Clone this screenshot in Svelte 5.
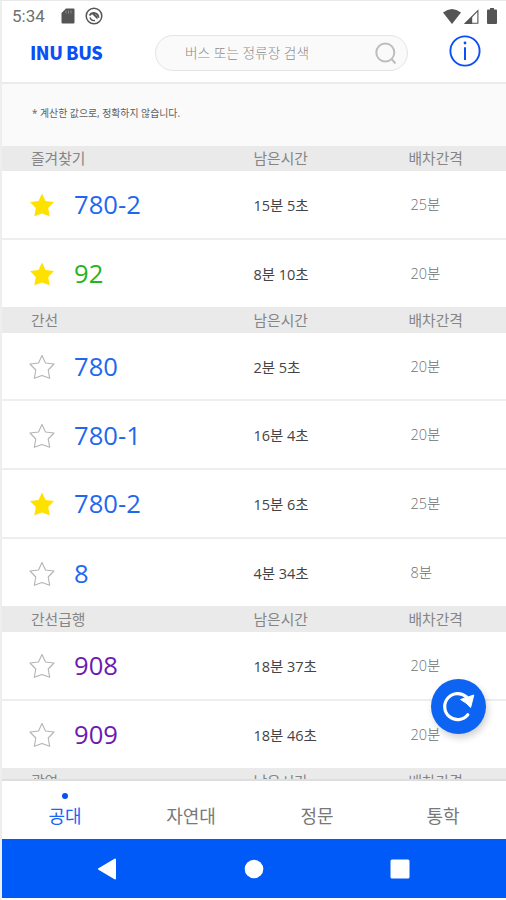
<script lang="ts">
	const groups = [
		{
			title: '즐겨찾기',
			routes: [
				{ no: '780-2', type: 'blue', left: '15분 5초', every: '25분', starred: true },
				{ no: '92', type: 'green', left: '8분 10초', every: '20분', starred: true }
			]
		},
		{
			title: '간선',
			routes: [
				{ no: '780', type: 'blue', left: '2분 5초', every: '20분', starred: false },
				{ no: '780-1', type: 'blue', left: '16분 4초', every: '20분', starred: false },
				{ no: '780-2', type: 'blue', left: '15분 6초', every: '25분', starred: true },
				{ no: '8', type: 'blue', left: '4분 34초', every: '8분', starred: false }
			]
		},
		{
			title: '간선급행',
			routes: [
				{ no: '908', type: 'purple', left: '18분 37초', every: '20분', starred: false },
				{ no: '909', type: 'purple', left: '18분 46초', every: '20분', starred: false }
			]
		},
		{ title: '광역', routes: [] }
	];

	const tabs = ['공대', '자연대', '정문', '통학'];
	let active = $state('공대');
</script>

<div class="screen">
	<div class="status">
		<span class="clock">5:34</span>
		<svg class="sd" width="14" height="16" viewBox="0 0 14 16">
			<path d="M5 0.5h7.5q1 0 1 1v13q0 1-1 1h-11q-1 0-1-1V5z" fill="#555" />
			<path d="M5 2.5v3M7.5 2.5v3M10 2.5v3" stroke="#888" stroke-width="1" />
		</svg>
		<svg class="dnd" width="18" height="18" viewBox="0 0 18 18" fill="none" stroke="#555">
			<circle cx="9" cy="9" r="7.8" stroke-width="1.5" />
			<path d="M4.5 8.5a4.8 4.8 0 0 1 9 2.2" stroke-width="1.8" />
			<path d="M5 10.5a4.4 4.4 0 0 0 5 3" stroke-width="1.3" />
			<path d="M7 7l5.5 5.5V9.2L9.5 6.8z" fill="#555" stroke="none" />
		</svg>
		<div class="signals">
			<svg width="18" height="15" viewBox="0 0 18 15">
				<path d="M0 3.6Q9-3.4 18 3.6L9 15z" fill="#555" />
			</svg>
			<svg width="15" height="15" viewBox="0 0 15 15">
				<path d="M13.9 1.6v12.7H1.4z" fill="none" stroke="#555" stroke-width="1.1" />
				<path d="M8.2 7.3V15H0z" fill="#555" />
			</svg>
			<svg width="10" height="16" viewBox="0 0 10 16">
				<path d="M3 0h4v1.6h2q1 0 1 1V15q0 1-1 1H1q-1 0-1-1V2.6q0-1 1-1h2z" fill="#555" />
			</svg>
		</div>
	</div>

	<header>
		<h1>INU BUS</h1>
		<div class="search">
			<span>버스 또는 정류장 검색</span>
			<svg width="22" height="22" viewBox="0 0 22 22" fill="none" stroke="#bdbdbd" stroke-width="2">
				<circle cx="10.3" cy="10.5" r="9" />
				<path d="M16.5 17L20.5 21.5" />
			</svg>
		</div>
		<svg class="info" width="32" height="32" viewBox="0 0 32 32" fill="none" stroke="#0a50f5">
			<circle cx="16" cy="16" r="14.6" stroke-width="1.9" />
			<path d="M16 12.3V25" stroke-width="2" />
			<circle cx="16" cy="8" r="1.4" fill="#0a50f5" stroke="none" />
		</svg>
	</header>

	<main>
		<p class="notice">* 계산한 값으로, 정확하지 않습니다.</p>
		{#each groups as group}
			<section>
				<div class="head cols">
					<span>{group.title}</span>
					<span>남은시간</span>
					<span>배차간격</span>
				</div>
				{#each group.routes as route}
					<div class="route cols">
						<div class="name">
							<svg width="26" height="26" viewBox="0 0 26 26" class:starred={route.starred}>
								<path d="M13 1.5L16.5 9L25 10L19.2 16L20.7 24.3L13 21.4L5.3 24.3L6.8 16L1 10L9.5 9z" />
							</svg>
							<b class={route.type}>{route.no}</b>
						</div>
						<span class="left">{route.left}</span>
						<span class="every">{route.every}</span>
					</div>
				{/each}
			</section>
		{/each}
	</main>

	<nav class="tabs">
		{#each tabs as tab}
			<button class:active={tab === active} onclick={() => (active = tab)}>{tab}</button>
		{/each}
	</nav>

	<div class="system">
		<svg width="20" height="22" viewBox="0 0 20 22">
			<path d="M18 1.5V20.5L2 11z" fill="#fff" stroke="#fff" stroke-width="2" stroke-linejoin="round" />
		</svg>
		<svg width="20" height="20" viewBox="0 0 20 20"><circle cx="10" cy="10" r="9.3" fill="#fff" /></svg>
		<svg width="20" height="20" viewBox="0 0 20 20">
			<rect x="0.5" y="0.5" width="19" height="19" rx="1.5" fill="#fff" />
		</svg>
	</div>

	<button class="refresh" aria-label="새로고침">
		<svg width="34" height="34" viewBox="0 0 34 34">
			<path d="M25.8 24.8A13 13 0 1 1 24.5 7" fill="none" stroke="#fff" stroke-width="3.2" stroke-linecap="round" />
			<path d="M18.5 9.5L23 8L31.8 5L28.6 17.5L24 13z" fill="#fff" stroke="#fff" stroke-linejoin="round" />
		</svg>
	</button>
</div>

<style>
	:global(body) {
		background: #fff;
	}

	.screen {
		box-sizing: border-box;
		position: relative;
		width: 506px;
		height: 900px;
		padding-bottom: 2px;
		border-left: 2px solid #eee;
		border-top: 1px solid #e8e8e8;
		display: flex;
		flex-direction: column;
		overflow: hidden;
		background: #fff;
		font-family: 'Open Sans', 'Noto Sans CJK KR', sans-serif;
	}

	.status {
		box-sizing: border-box;
		height: 31px;
		flex: none;
		display: flex;
		align-items: center;
		padding: 0 9px 1px 10px;
	}

	.clock {
		width: 49px;
		font-family: Roboto, sans-serif;
		font-size: 17px;
		color: #707070;
	}

	.dnd {
		margin-left: 10px;
	}

	.signals {
		display: flex;
		align-items: center;
		margin-left: auto;
	}

	.signals svg:nth-child(2) {
		margin: 0 8px 0 3px;
	}

	header {
		box-sizing: border-box;
		height: 52px;
		flex: none;
		display: flex;
		padding: 3px 25px 0 28px;
		border-bottom: 2px solid #ebebeb;
	}

	h1 {
		width: 125px;
		margin: 0;
		font: 900 18px/35px 'Noto Sans CJK KR', sans-serif;
		letter-spacing: -0.45px;
		color: #0a50f5;
	}

	.search {
		box-sizing: border-box;
		width: 253px;
		height: 36px;
		display: flex;
		align-items: center;
		justify-content: space-between;
		padding: 0 10px 0 29px;
		border: 1.5px solid #e4e4e4;
		border-radius: 18px;
		background: #fafafa;
		font-size: 13.7px;
		font-weight: 300;
		color: #8c8c8c;
	}

	.search span {
		margin-top: -3px;
	}

	.info {
		margin-left: auto;
	}

	main {
		flex: 1;
		min-height: 0;
		overflow: hidden;
	}

	.notice {
		box-sizing: border-box;
		height: 61.5px;
		margin: 0;
		padding-left: 30px;
		background: #fafafa;
		font-size: 9.9px;
		line-height: 59px;
		color: #606060;
	}

	.cols {
		display: grid;
		grid-template-columns: 222.5px 157px 1fr;
		align-items: center;
		padding-left: 29px;
	}

	.head {
		height: 25.5px;
		background: #eaeaea;
		font-size: 14.8px;
		line-height: 25px;
		color: #858585;
	}

	.head span:last-child {
		margin-left: -2px;
	}

	.route {
		box-sizing: border-box;
		height: 68.6px;
		border-bottom: 2px solid #eee;
	}

	.route:last-child {
		height: 67.8px;
		border: 0;
	}

	.name {
		display: flex;
		align-items: center;
		margin: 2px 0 0 -2px;
	}

	.name path {
		fill: none;
		stroke: #b4b4b4;
		stroke-width: 1.1;
		stroke-linejoin: round;
	}

	.name .starred path {
		fill: #ffe100;
		stroke: none;
	}

	b {
		margin-left: 19px;
		font-weight: 400;
		font-size: 25.6px;
		line-height: 34px;
	}

	.blue {
		color: #1f68ee;
	}

	.green {
		color: #22b522;
	}

	.purple {
		color: #6c1ab2;
	}

	.left,
	.every {
		font-size: 14.5px;
		letter-spacing: -0.05px;
		color: #444;
	}

	.every {
		margin-top: -2px;
		font-weight: 300;
		color: #707070;
	}

	.tabs {
		box-sizing: border-box;
		height: 60px;
		flex: none;
		display: grid;
		grid-template-columns: repeat(4, 1fr);
		border-top: 2px solid #dedede;
	}

	.tabs button {
		position: relative;
		padding: 9px 0 0;
		border: 0;
		background: none;
		font-family: inherit;
		font-size: 18px;
		color: #787878;
	}

	.tabs .active {
		color: #1b66f5;
	}

	.tabs .active::before {
		content: '';
		position: absolute;
		top: 12px;
		left: calc(50% - 3px);
		width: 6px;
		height: 6px;
		border-radius: 50%;
		background: #0a50f5;
	}

	.system {
		height: 59px;
		flex: none;
		display: flex;
		align-items: center;
		justify-content: space-between;
		padding: 0 96px 0 95px;
		background: #005af8;
	}

	.refresh {
		position: absolute;
		right: 20px;
		top: 678px;
		width: 55px;
		height: 55px;
		display: grid;
		place-items: center;
		padding: 0;
		border: 0;
		border-radius: 50%;
		background: #0d64f2;
		box-shadow: 2px 4px 7px rgba(0, 0, 0, 0.18);
	}
</style>
